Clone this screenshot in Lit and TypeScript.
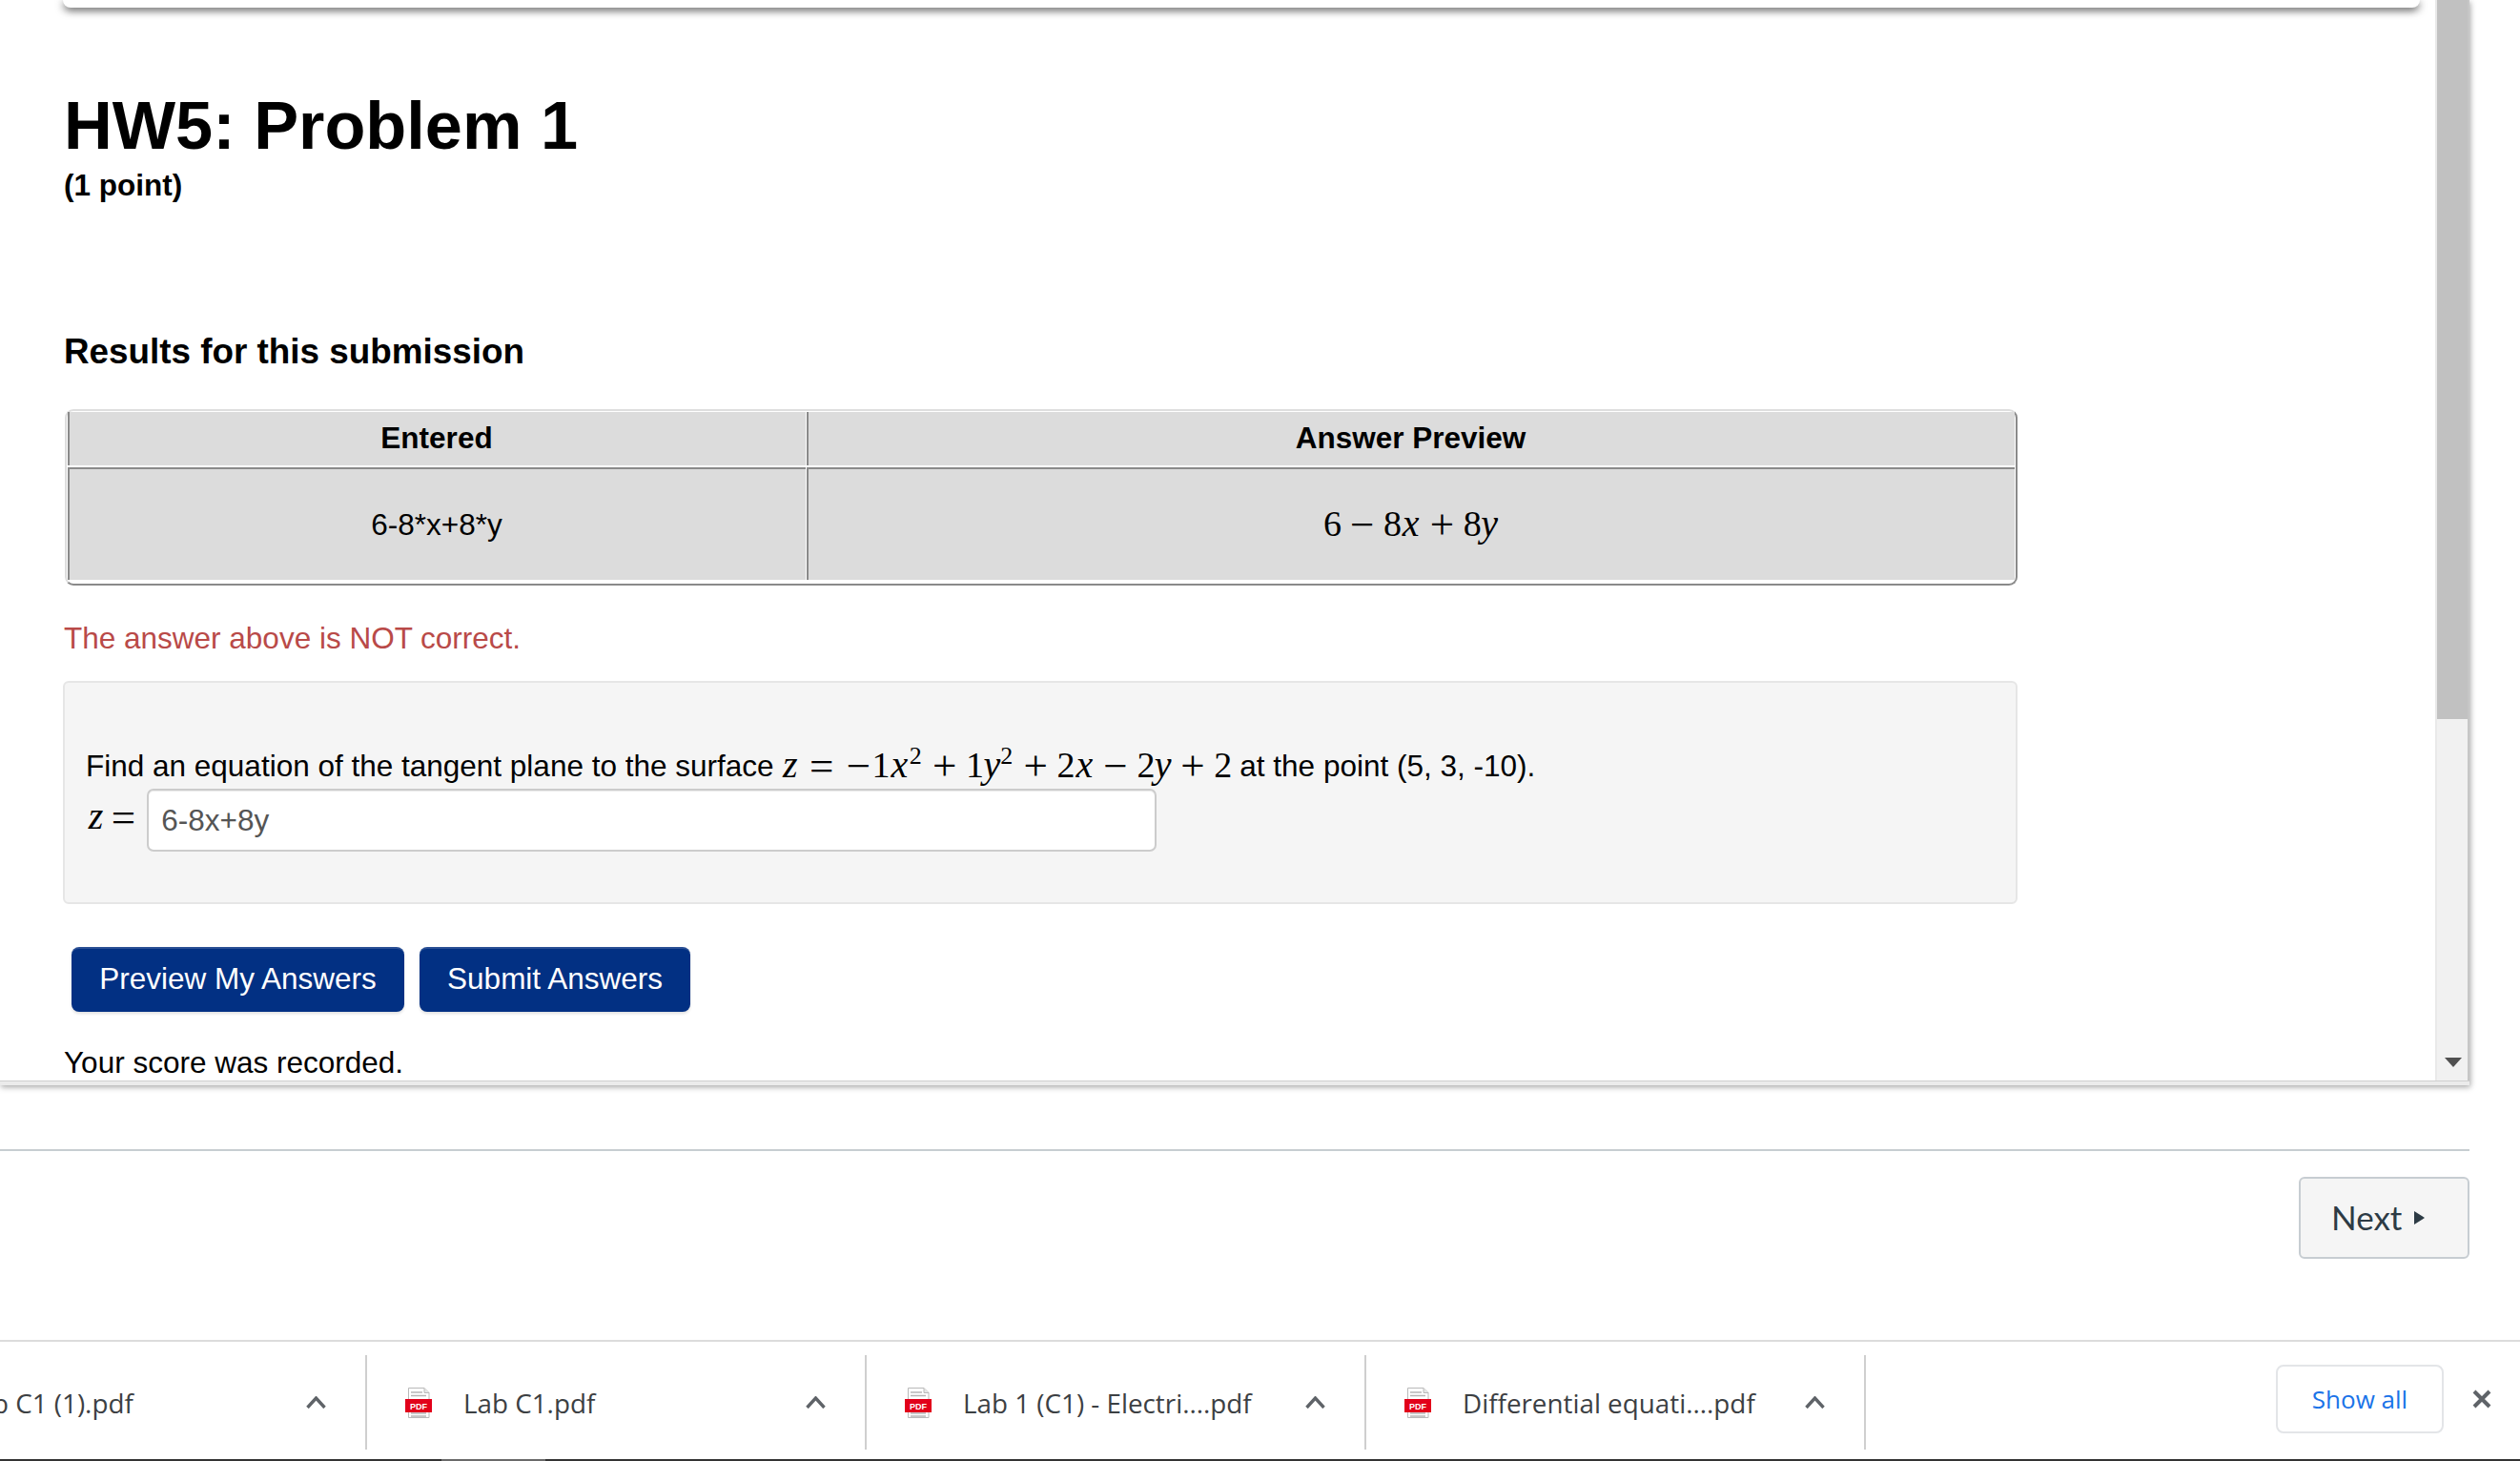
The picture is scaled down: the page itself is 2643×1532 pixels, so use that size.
import { LitElement, html, css } from "lit";
import { customElement } from "lit/decorators.js";

const EM = 36.6;
type Atom = [string, number, string?];
const V = "v", O = "op", S = "sup";

const renderMath = (atoms: Atom[]) => html`<span class="math">${atoms.map(
  ([t, w, c]) => html`<span class="a ${c ?? ""}" style="width:${(w * EM).toFixed(1)}px">${t}</span>`
)}</span>`;

const sumAtoms: Atom[] = [
  ["z", 0.465, V], ["=", 1.334, O], ["−", 0.778, O], ["1", 0.5], ["x", 0.572, V], ["2", 0.398, S],
  ["+", 1.222, O], ["1", 0.5], ["y", 0.49, V], ["2", 0.398, S], ["+", 1.222, O], ["2", 0.5], ["x", 0.572, V],
  ["−", 1.222, O], ["2", 0.5], ["y", 0.49, V], ["+", 1.222, O], ["2", 0.5],
];
const previewAtoms: Atom[] = [
  ["6", 0.5], ["−", 1.222, O], ["8", 0.5], ["x", 0.572, V], ["+", 1.222, O], ["8", 0.5], ["y", 0.49, V],
];
const labelAtoms: Atom[] = [["z", 0.58, V], ["=", 1.0, O]];

const pdfIcon = html`<svg class="pdf" viewBox="0 0 28 32" width="28" height="32" aria-hidden="true">
  <path d="M3.5 .5H20L25 5.5V31.5H3.5Z" fill="#fff" stroke="#b9b9b9"/>
  <path d="M20 .5V5.5H25" fill="#e6e6e6" stroke="#b9b9b9"/>
  <path d="M6 5H18M6 8.5H22M6 27H22M6 30H22" stroke="#b5b5b5" stroke-width="1.4"/>
  <rect x="0" y="12" width="28" height="14" fill="#e2001a"/>
  <text x="14" y="22.5" text-anchor="middle" class="pdft">PDF</text>
</svg>`;

const chevron = html`<svg class="chev" viewBox="0 0 21 13" width="21" height="13" aria-hidden="true">
  <path d="M1.5 12L10.5 2L19.5 12" fill="none" stroke="#5f6368" stroke-width="3.4"/>
</svg>`;

const files = ["Lab C1 (1).pdf", "Lab C1.pdf", "Lab 1 (C1) - Electri....pdf", "Differential equati....pdf"];

@customElement("app-root")
export class AppRoot extends LitElement {
  static styles = css`
    :host { display: flex; flex-direction: column; width: 2643px; height: 1532px; overflow: hidden; background: #fff; color: #000; font-family: "Liberation Sans", Arial, sans-serif; font-size: 31.5px; }
    .frame { width: 2590px; height: 1138px; flex: none; display: flex; flex-direction: column; box-shadow: 1px 2px 6px rgba(0,0,0,.35); }
    .view { height: 1133px; flex: none; display: flex; }
    .content { flex: 1; min-width: 0; overflow: hidden; padding-left: 66px; }
    .band { flex: 1; background: #ebebeb; border-top: 1px solid #cfcfcf; }
    .card { width: 2472px; height: 8px; border-radius: 0 0 9px 9px; background: #fff; box-shadow: 0 3px 8px rgba(0,0,0,.65); }
    h1 { margin: 89px 0 0 1px; font-size: 70.3px; line-height: 70px; font-weight: 700; }
    .pts { margin: 9px 0 0 1px; font-weight: 700; line-height: 36px; }
    h2 { margin: 134.5px 0 0 1px; font-size: 36.85px; line-height: 44px; font-weight: 700; }
    .table { box-sizing: border-box; width: 2048px; height: 185px; margin: 38.5px 0 0 2px; padding: 1px 1px 4px; border: 2px solid; border-color: #dedede #8a8a8a #8a8a8a #dedede; border-radius: 9px; display: grid; grid-template-columns: 774px 1267px; grid-template-rows: 56px 118px; column-gap: 1px; row-gap: 2px; }
    .cell { background: #dcdcdc; border-left: 2px solid #8a8a8a; display: flex; align-items: center; justify-content: center; box-sizing: border-box; }
    .th { font-weight: 700; padding: 0 2px 2px 0; }
    .td { border-top: 2px solid #8a8a8a; padding-right: 2px; }
    .err { margin: 37px 0 0 1px; color: #b94a48; line-height: 36px; }
    .box { box-sizing: border-box; width: 2050px; height: 234px; margin-top: 27px; padding: 64px 22px 0; background: #f5f5f5; border: 2px solid #e6e6e6; border-radius: 6px; }
    .find { height: 46px; line-height: 46px; white-space: nowrap; }
    .find .math { vertical-align: -1px; }
    .row { display: flex; align-items: center; margin-top: 1px; }
    .row .math { margin-bottom: 6px; }
    input { box-sizing: border-box; width: 1059px; height: 66px; margin: 0 0 0 6.5px; padding: 0 13px; border: 2px solid #cccccc; border-radius: 7px; background: #fff; color: #555; font: 31.5px "Liberation Sans", Arial, sans-serif; outline: none; box-shadow: inset 0 1px 1px rgba(0,0,0,.08); }
    .btns { display: flex; gap: 16px; margin: 44.5px 0 0 9px; }
    .btn { box-sizing: border-box; height: 68px; border: 0; border-top: 2px solid #2a4f94; border-radius: 8px; background: #023083; color: #fff; font: 31.5px "Liberation Sans", Arial, sans-serif; box-shadow: 0 2px 3px rgba(0,0,0,.12); padding: 0 0 2px; }
    .b1 { width: 349px; }
    .b2 { width: 284px; }
    .score { margin: 35px 0 0 1px; line-height: 36px; white-space: nowrap; }
    .math { display: inline-block; white-space: nowrap; font-family: "Liberation Serif", "Times New Roman", serif; font-size: 38px; line-height: 1; }
    .a { display: inline-block; text-align: center; line-height: 1; }
    .v { font-style: italic; font-size: 40px; }
    .op { font-size: 45px; vertical-align: -3px; }
    .sup { font-size: 26px; vertical-align: 14px; text-align: left; }
    .sb { box-sizing: border-box; width: 36px; flex: none; display: flex; flex-direction: column; background: #f1f1f1; border-left: 2px solid #e9e9e9; border-right: 2px solid #c6c6c6; }
    .thumb { height: 754px; flex: none; background: #c1c1c1; }
    .arrow { margin: auto 0 14px 8px; width: 0; height: 0; border-left: 9px solid transparent; border-right: 9px solid transparent; border-top: 10px solid #505050; }
    .nav { margin-top: 67px; width: 2590px; flex: none; }
    .rule { height: 2px; background: #c7cdd1; }
    .navrow { display: flex; justify-content: flex-end; margin-top: 27px; }
    .next { box-sizing: border-box; width: 179px; height: 86px; display: flex; align-items: center; gap: 13px; padding: 0 0 3px 32px; background: #f5f5f5; border: 2px solid #c7cdd2; border-radius: 6px; color: #2d3b45; font: 35px Lato, "Liberation Sans", sans-serif; }
    .tri { width: 0; height: 0; border-left: 11px solid #2d3b45; border-top: 7px solid transparent; border-bottom: 7px solid transparent; margin-top: 3px; }
    .shelf { margin-top: 85px; flex: 1; min-height: 0; display: flex; flex-direction: column; border-top: 2px solid #dcdcdc; }
    .shelfrow { flex: 1; display: flex; align-items: flex-start; padding-top: 14px; position: relative; }
    .item { box-sizing: border-box; width: 524px; height: 99px; flex: none; display: flex; align-items: center; padding: 0 41px 0 40px; border-right: 2px solid #cfcfcf; font: 27.8px "Open Sans", "Noto Sans", sans-serif; color: #3c4043; }
    .item:first-child { margin-left: -139px; }
    .item:last-of-type { border-right-color: #c4c4c4; }
    .pdf { flex: none; margin-right: 33px; }
    .pdft { font: 700 9px "Liberation Sans", sans-serif; fill: #fff; }
    .fname { flex: 1; min-width: 0; white-space: nowrap; }
    .chev { flex: none; }
    .show { box-sizing: border-box; position: absolute; left: 2387px; top: 24px; width: 176px; height: 72px; display: flex; align-items: center; justify-content: center; background: #fff; border: 2px solid #e3e5e8; border-radius: 8px; color: #1a73e8; font: 500 26px "Open Sans", "Noto Sans", sans-serif; }
    .close { position: absolute; left: 2593px; top: 50px; }
    .strip { height: 2px; flex: none; background: #333; display: flex; }
    .strip i { display: block; width: 109px; margin-left: 463px; background: #6a6a6a; }
  `;

  render() {
    return html`
      <div class="frame">
        <div class="view">
          <div class="content">
            <div class="card"></div>
            <h1>HW5: Problem 1</h1>
            <p class="pts">(1 point)</p>
            <h2>Results for this submission</h2>
            <div class="table">
              <div class="cell th">Entered</div>
              <div class="cell th">Answer Preview</div>
              <div class="cell td">6-8*x+8*y</div>
              <div class="cell td">${renderMath(previewAtoms)}</div>
            </div>
            <p class="err">The answer above is NOT correct.</p>
            <div class="box">
              <div class="find">Find an equation of the tangent plane to the surface ${renderMath(sumAtoms)} at the point (5, 3, -10).</div>
              <div class="row">${renderMath(labelAtoms)}<input type="text" value="6-8x+8y" /></div>
            </div>
            <div class="btns">
              <button class="btn b1">Preview My Answers</button>
              <button class="btn b2">Submit Answers</button>
            </div>
            <p class="score">Your score was recorded.</p>
          </div>
          <div class="sb"><div class="thumb"></div><div class="arrow"></div></div>
        </div>
        <div class="band"></div>
      </div>
      <div class="nav">
        <div class="rule"></div>
        <div class="navrow"><div class="next">Next<span class="tri"></span></div></div>
      </div>
      <div class="shelf">
        <div class="shelfrow">
          ${files.map((f) => html`<div class="item">${pdfIcon}<span class="fname">${f}</span>${chevron}</div>`)}
          <div class="show">Show all</div>
          <svg class="close" viewBox="0 0 20 20" width="20" height="20" aria-hidden="true"><path d="M2 2L18 18M18 2L2 18" stroke="#5f6368" stroke-width="4"/></svg>
        </div>
        <div class="strip"><i></i></div>
      </div>
    `;
  }
}
